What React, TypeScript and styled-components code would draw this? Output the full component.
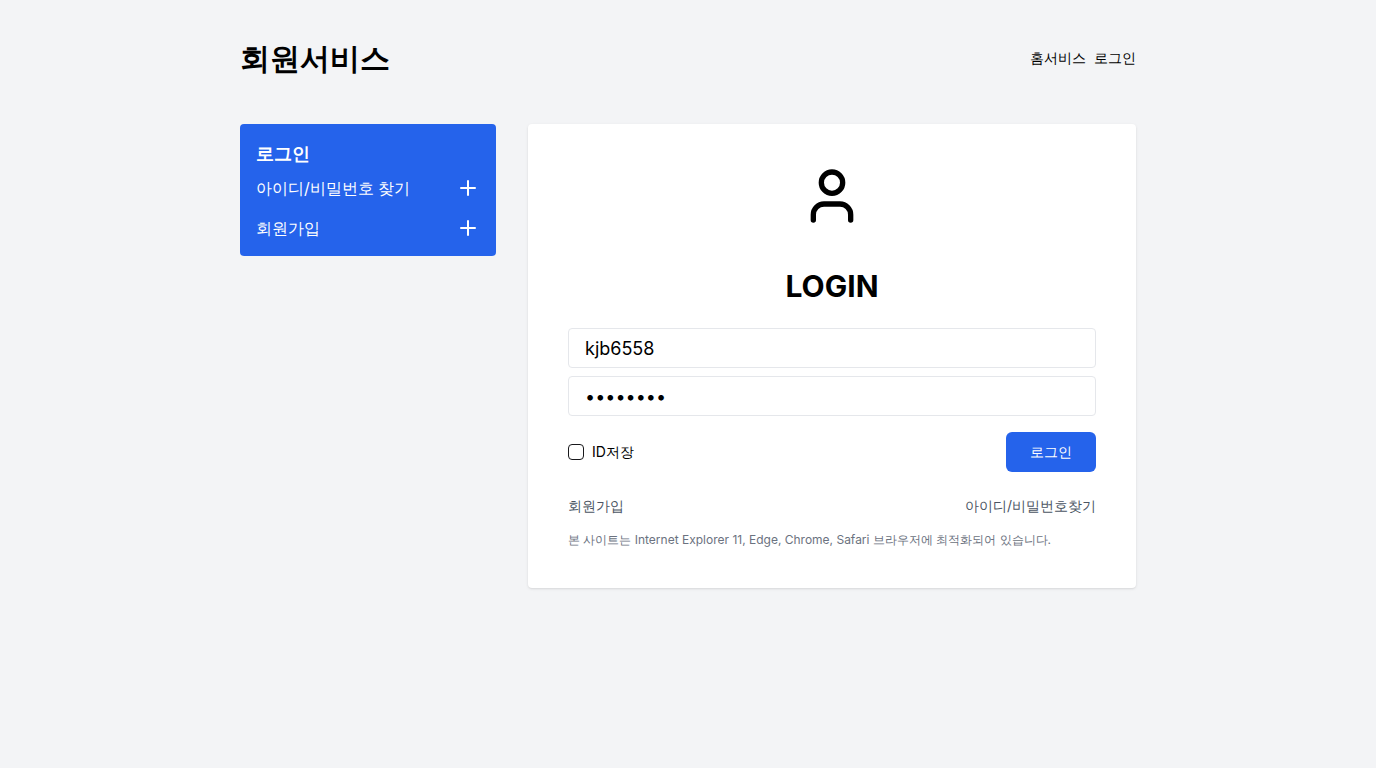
import React from "react";
import styled, { createGlobalStyle } from "styled-components";
import { Plus, User } from "lucide-react";

const GlobalStyle = createGlobalStyle`
  *, *::before, *::after { box-sizing: border-box; }
  body {
    margin: 0;
    background: #f3f4f6;
    color: #000;
    font-family: Inter, sans-serif;
    font-size: 16px;
    line-height: 24px;
  }
  button, input { font: inherit; color: inherit; }
  a { color: inherit; text-decoration: none; }
`;

const Page = styled.div`
  width: 100%;
  max-width: 928px;
  margin: 0 auto;
  padding: 40px 16px;
`;

const Header = styled.header`
  display: flex;
  align-items: center;
  justify-content: space-between;
  margin-bottom: 48px;
`;

const Title = styled.h1`
  margin: 0;
  font-size: 30px;
  line-height: 36px;
  font-weight: 700;
`;

const Nav = styled.nav`
  display: flex;
  gap: 8px;
  font-size: 14px;
  line-height: 20px;
`;

const Columns = styled.div`
  display: flex;
  align-items: flex-start;
  gap: 32px;
`;

const Sidebar = styled.aside`
  flex: 0 0 256px;
  padding: 16px 16px 8px;
  border-radius: 4px;
  background: #2563eb;
  color: #fff;
`;

const SidebarTitle = styled.h2`
  margin: 0;
  font-size: 18px;
  line-height: 28px;
  font-weight: 700;
`;

const SidebarItem = styled.button`
  display: flex;
  align-items: center;
  justify-content: space-between;
  width: 100%;
  height: 40px;
  padding: 0;
  border: 0;
  background: none;
  cursor: pointer;
`;

const Card = styled.main`
  flex: 1;
  min-width: 0;
  padding: 40px;
  border-radius: 4px;
  background: #fff;
  box-shadow: 0 1px 3px rgba(0, 0, 0, 0.1), 0 1px 2px -1px rgba(0, 0, 0, 0.1);
`;

const CardHead = styled.div`
  display: flex;
  flex-direction: column;
  align-items: center;
  gap: 40px;
  margin-bottom: 24px;
`;

const CardTitle = styled.h2`
  margin: 0;
  font-size: 30px;
  line-height: 36px;
  font-weight: 700;
`;

const Fields = styled.div`
  display: flex;
  flex-direction: column;
  gap: 8px;
`;

const Field = styled.input`
  width: 100%;
  height: 40px;
  padding: 0 16px;
  border: 1px solid #e5e7eb;
  border-radius: 4px;
  background: #fff;
  font-size: 18px;
  outline: none;
`;

const Row = styled.div`
  display: flex;
  align-items: center;
  justify-content: space-between;
  font-size: 14px;
  line-height: 20px;
`;

const ActionRow = styled(Row)`
  margin: 16px 0 24px;
`;

const LinkRow = styled(Row)`
  margin-bottom: 16px;
  color: #4b5563;
`;

const CheckLabel = styled.label`
  display: flex;
  align-items: center;
  gap: 8px;
`;

const Checkbox = styled.input`
  appearance: none;
  width: 16px;
  height: 16px;
  margin: 0;
  border: 1px solid #18181b;
  border-radius: 4px;
  background: #fff;
  &:checked { background: #18181b; }
`;

const Submit = styled.button`
  height: 40px;
  padding: 0 24px;
  border: 0;
  border-radius: 6px;
  background: #2563eb;
  color: #fff;
  cursor: pointer;
`;

const Note = styled.p`
  margin: 0;
  font-size: 12px;
  line-height: 16px;
  color: #6b7280;
`;

export default function App() {
  return (
    <Page>
      <GlobalStyle />
      <Header>
        <Title>회원서비스</Title>
        <Nav>
          <a href="#home">홈서비스</a>
          <a href="#login">로그인</a>
        </Nav>
      </Header>
      <Columns>
        <Sidebar>
          <SidebarTitle>로그인</SidebarTitle>
          <SidebarItem type="button">
            아이디/비밀번호 찾기
            <Plus size={24} />
          </SidebarItem>
          <SidebarItem type="button">
            회원가입
            <Plus size={24} />
          </SidebarItem>
        </Sidebar>
        <Card>
          <CardHead>
            <User size={64} />
            <CardTitle>LOGIN</CardTitle>
          </CardHead>
          <form onSubmit={(event) => event.preventDefault()}>
            <Fields>
              <Field type="text" aria-label="아이디" defaultValue="kjb6558" />
              <Field type="password" aria-label="비밀번호" defaultValue="password" />
            </Fields>
            <ActionRow>
              <CheckLabel>
                <Checkbox type="checkbox" />
                ID저장
              </CheckLabel>
              <Submit type="submit">로그인</Submit>
            </ActionRow>
          </form>
          <LinkRow>
            <a href="#join">회원가입</a>
            <a href="#find">아이디/비밀번호찾기</a>
          </LinkRow>
          <Note>본 사이트는 Internet Explorer 11, Edge, Chrome, Safari 브라우저에 최적화되어 있습니다.</Note>
        </Card>
      </Columns>
    </Page>
  );
}
